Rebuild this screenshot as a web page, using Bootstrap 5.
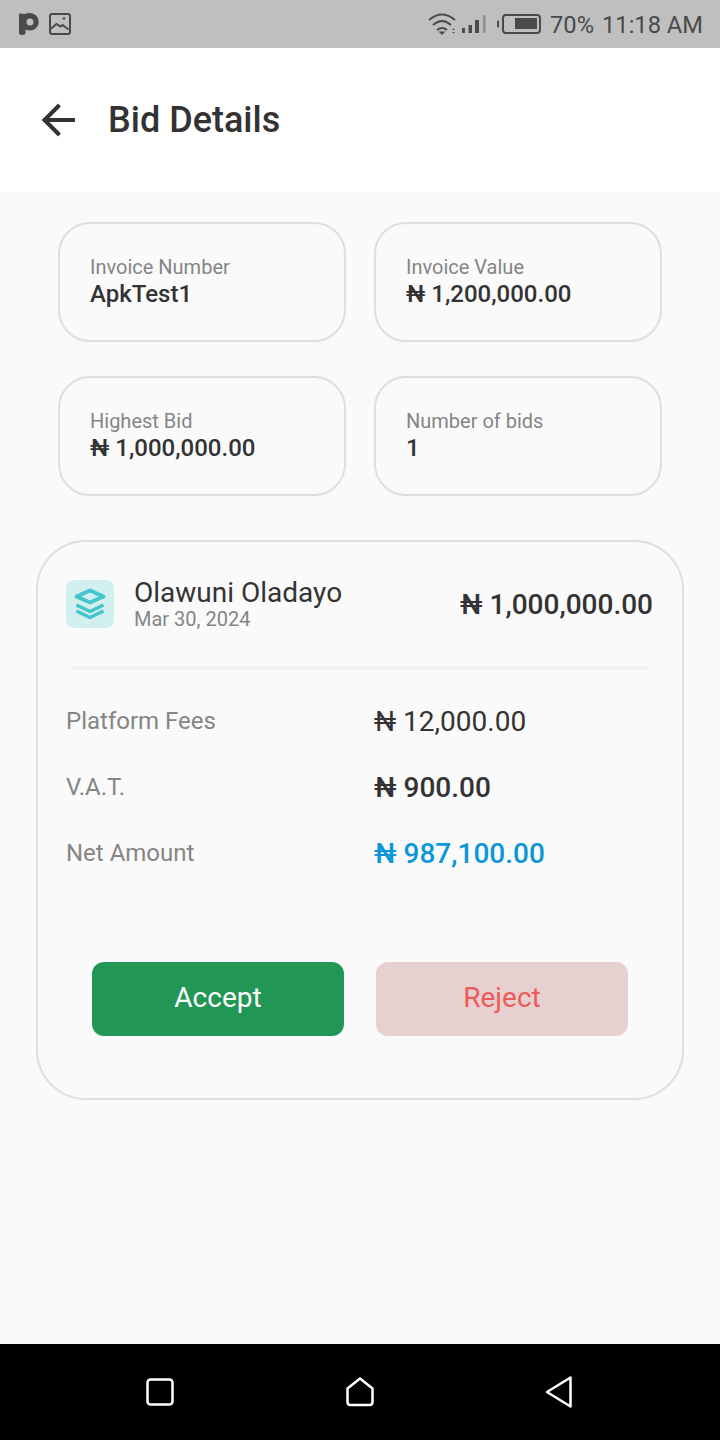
<!DOCTYPE html>
<html lang="en">
<head>
<meta charset="utf-8">
<title>Bid Details</title>
<link href="https://cdn.jsdelivr.net/npm/bootstrap@5.3.0/dist/css/bootstrap.min.css" rel="stylesheet">
<style>
html,body{margin:0;padding:0}
body{width:720px;height:1440px;overflow:hidden;font-family:Roboto,"Liberation Sans",sans-serif;background:#fafafa;color:#333}
.shell{height:1440px}
.statusbar{height:48px;background:#bfbfbf;color:#4a4a4a;padding:0 17px 0 19px;font-size:23.7px;line-height:48px}
.statusbar svg{display:block}
.statustext{padding-top:2px}
.appbar{height:144px;background:#fff;padding-left:40px;gap:32px}
.appbar h1{font-size:36px;font-weight:500;margin:0;color:#333;line-height:1}
.mainarea{padding:30px 36px 0}
.tilegrid{display:grid;grid-template-columns:288px 288px;gap:34px 28px;padding:0 22px;margin-bottom:44px}
.tile{height:120px;border:2px solid #dedede;border-radius:32px;padding:0 30px;display:flex;flex-direction:column;justify-content:center}
.tile-label{font-size:20px;line-height:24px;color:#858585;margin-top:-1px;margin-bottom:1px}
.tile-value{font-size:24px;line-height:28px;font-weight:500;color:#333}
.bidcard{height:560px;border:2px solid #dedede;border-radius:50px;padding:0 29px 0 28px}
.bidhead{height:124px;padding-top:2px}
.logo-box{width:48px;height:48px;background:#d3f0f1;border-radius:8px;margin:0 20px 2px 0}
.bidder{font-size:28px;line-height:30px;color:#333}
.biddate{font-size:20px;line-height:24px;color:#858585;margin-top:-1px;margin-bottom:1px}
.bidamount{font-size:28px;font-weight:500;color:#333}
.hairline{height:4px;background:#f2f2f2;margin:0 5px 19px 6px}
.feerow{height:66px;display:flex;align-items:center}
.feelabel{width:308px;color:#858585;font-size:24px;margin-bottom:2px}
.feeval{font-size:28px;color:#333}
.fw-m{font-weight:500}
.netval{color:#0d97d8;font-weight:500}
.actions{margin:75px 26px 0;gap:32px}
.actbtn{flex:0 0 252px;height:74px;border-radius:12px;font-size:28px;border:0;padding:0 0 2px}
.act-ok,.act-ok:hover{background:#229654;color:#fff}
.act-no,.act-no:hover{background:#e7d0d0;color:#ee5a5a}
.navbarbottom{height:96px;background:#000;padding:0 146px}
</style>
</head>
<body>
<div class="shell d-flex flex-column">
  <div class="statusbar d-flex align-items-center justify-content-between">
    <div class="d-flex align-items-center gap-2">
      <svg width="21" height="24" viewBox="0 0 21 24"><path fill="#4a4a4a" fill-rule="evenodd" d="M0 1.500L6 2Q8 1 11 1a8.500 8.500 0 0 1 0 17.500Q8 18.500 6.500 17.500V22Q3 24 0 22zM11 6.500a3.500 3.500 0 1 0 0 7 3.500 3.500 0 0 0 0-7z"/></svg>
      <svg width="24" height="24" viewBox="0 0 24 24" fill="none" stroke="#4a4a4a" stroke-width="2"><rect x="2" y="2" width="20" height="20" rx="2"/><path d="M2.500 17l6-5 4 2.500 2-1.500 6 4.500"/><circle cx="16" cy="6.500" r="1.300" fill="#4a4a4a" stroke="none"/></svg>
    </div>
    <div class="d-flex align-items-center">
      <svg width="60" height="24" viewBox="0 0 60 24" fill="none" stroke="#4a4a4a" stroke-width="2" class="me-2"><path d="M1 8Q14-3 27 8M5 13Q14 5 23 13M9 18Q14 14 19 18"/><path d="M10.500 19.500h7L14 23z" fill="#4a4a4a" stroke="none"/><path d="M24 18l1.500-1.500L27 18zM24 20l1.500 1.500L27 20z" fill="#4a4a4a" stroke="none"/><path d="M34 16h3v5h-3zM40.500 13h3.500v8h-3.500zM47 8h4v13h-4z" fill="#4a4a4a" stroke="none"/><path d="M55 3h2.500v18H55z" fill="#8f8f8f" stroke="none"/></svg>
      <svg width="46" height="24" viewBox="0 0 46 24" class="me-2"><path fill="#4a4a4a" d="M1 9.500l2-1.500v8l-2-1.500z"/><rect x="7" y="3" width="37" height="18" rx="3" fill="none" stroke="#4a4a4a" stroke-width="2"/><rect x="19" y="6" width="22" height="11" fill="#4a4a4a"/></svg>
      <span class="statustext">70%</span><span class="statustext ms-2">11:18 AM</span>
    </div>
  </div>

  <div class="appbar d-flex align-items-center">
    <svg width="36" height="36" viewBox="0 0 36 36" fill="none" stroke="#333" stroke-width="4"><path d="M35 18H4.500M19.500 3L4.500 18l15 15"/></svg>
    <h1>Bid Details</h1>
  </div>

  <div class="mainarea flex-grow-1">
    <div class="tilegrid">
      <div class="tile"><div class="tile-label">Invoice Number</div><div class="tile-value">ApkTest1</div></div>
      <div class="tile"><div class="tile-label">Invoice Value</div><div class="tile-value">₦ 1,200,000.00</div></div>
      <div class="tile"><div class="tile-label">Highest Bid</div><div class="tile-value">₦ 1,000,000.00</div></div>
      <div class="tile"><div class="tile-label">Number of bids</div><div class="tile-value">1</div></div>
    </div>
    <div class="bidcard">
      <div class="bidhead d-flex align-items-center">
        <div class="logo-box d-flex align-items-center justify-content-center flex-shrink-0">
          <svg width="34" height="34" viewBox="0 0 34 34" fill="none" stroke="#45c4cc" stroke-width="3.500" stroke-linejoin="round"><path stroke-width="4" d="M17 3.500L30.500 9.500 17 15.500 3.500 9.500z"/><path d="M3.500 18l13.500 6.500L30.500 18M3.500 24l13.500 6.500L30.500 24"/></svg>
        </div>
        <div class="flex-grow-1">
          <div class="bidder">Olawuni Oladayo</div>
          <div class="biddate">Mar 30, 2024</div>
        </div>
        <div class="bidamount">₦ 1,000,000.00</div>
      </div>
      <div class="hairline"></div>
      <div class="feerow"><div class="feelabel">Platform Fees</div><div class="feeval">₦ 12,000.00</div></div>
      <div class="feerow"><div class="feelabel">V.A.T.</div><div class="feeval fw-m">₦ 900.00</div></div>
      <div class="feerow"><div class="feelabel">Net Amount</div><div class="feeval netval">₦ 987,100.00</div></div>
      <div class="actions d-flex">
        <button class="btn actbtn act-ok" type="button">Accept</button>
        <button class="btn actbtn act-no" type="button">Reject</button>
      </div>
    </div>
  </div>

  <div class="navbarbottom d-flex align-items-center justify-content-between">
    <svg width="28" height="28" viewBox="0 0 28 28" fill="none" stroke="#fff" stroke-width="2.500"><rect x="1.500" y="1.500" width="25" height="25" rx="3"/></svg>
    <svg width="28" height="30" viewBox="0 0 28 30" fill="none" stroke="#fff" stroke-width="2.500" stroke-linejoin="round"><path d="M14 1.500L26.500 11.500V25q0 3-3 3H4.500q-3 0-3-3V11.500z"/></svg>
    <svg width="28" height="32" viewBox="0 0 28 32" fill="none" stroke="#fff" stroke-width="2.500" stroke-linejoin="round"><path d="M24.500 1.500V30.500L1 16z"/></svg>
  </div>
</div>
<script src="https://cdn.jsdelivr.net/npm/bootstrap@5.3.0/dist/js/bootstrap.bundle.min.js"></script>
</body>
</html>
